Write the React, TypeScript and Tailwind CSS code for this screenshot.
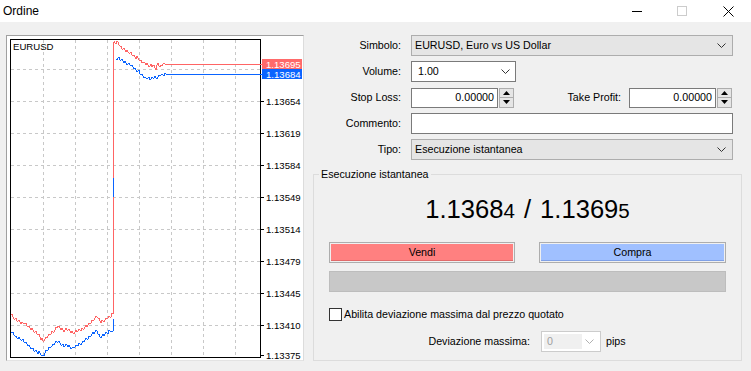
import React from "react";

type Pt = [number, number];

const redLeft: Pt[] = [[11,313],[13,317],[17,320],[21,323],[25,323],[29,327],[33,330],[37,333],[40,337],[43,341],[46,338],[50,334],[54,331],[58,326],[61,329],[64,331],[67,329],[70,331],[73,333],[77,331],[81,330],[85,327],[89,324],[93,320],[97,316],[99,319],[101,322],[104,321],[107,318],[110,317],[113,313]];
const blueLeft: Pt[] = [[11,331],[13,333],[17,338],[21,339],[25,342],[29,346],[33,349],[37,352],[40,353],[43,356],[46,351],[50,347],[54,344],[58,341],[61,344],[64,346],[67,345],[70,347],[73,348],[77,345],[81,344],[85,340],[89,337],[93,333],[97,331],[100,337],[103,335],[107,333],[110,331],[113,331]];
const redRight: Pt[] = [[114,42],[116,43],[118,42],[120,46],[123,49],[126,51],[129,52],[132,54],[135,57],[138,58],[141,61],[144,63],[147,64],[150,66],[153,65],[156,69],[158,63],[160,67],[163,64],[166,64]];
const blueRight: Pt[] = [[116,59],[119,58],[121,60],[124,62],[127,64],[130,64],[133,67],[136,70],[139,71],[142,75],[145,78],[148,78],[151,79],[154,77],[157,78],[160,75],[163,75],[166,74]];

const jitter = [0, 1, -1, 0, 1, 0, -1, 1, 0, -1];

// walk keypoints pixel by pixel with a little jag, like the terminal draws ticks
function series(keys: Pt[], seed: number) {
  const out: string[] = [];
  for (let k = 0; k < keys.length - 1; k++) {
    const [x0, y0] = keys[k];
    const [x1, y1] = keys[k + 1];
    for (let x = x0; x < x1; x++) {
      const y = y0 + ((y1 - y0) * (x - x0)) / (x1 - x0);
      out.push(`${x},${Math.round(y + jitter[(x + seed) % 10] * 1.2)}`);
    }
  }
  const last = keys[keys.length - 1];
  out.push(`${last[0]},${last[1]}`);
  return out.join(" ");
}

const gridX = [43, 75, 107, 139, 171, 203, 235];
const gridY = [69, 101, 133, 165, 197, 229, 261, 293, 325];
const axis = [
  ["1.13654", 101], ["1.13619", 133], ["1.13584", 165], ["1.13549", 197], ["1.13514", 229],
  ["1.13479", 261], ["1.13445", 293], ["1.13410", 325], ["1.13375", 355],
] as const;

function Chart() {
  return (
    <svg width="296" height="324" viewBox="7 36 296 324" shapeRendering="crispEdges" style={{ fontFamily: '"Liberation Sans", Arial, sans-serif' }}>
      {gridX.map((x) => (
        <line key={x} x1={x + 0.5} y1={40} x2={x + 0.5} y2={357} stroke="#c8c8c8" strokeDasharray="3 3" />
      ))}
      {gridY.map((y) => (
        <line key={y} x1={11} y1={y + 0.5} x2={260} y2={y + 0.5} stroke="#c8c8c8" strokeDasharray="3 3" />
      ))}
      <rect x={10.5} y={39.5} width={250} height={318} fill="none" stroke="#000" />
      <text x={13} y={50} fontSize="9.6" fill="#000">EURUSD</text>

      <polyline points={series(redLeft, 0)} fill="none" stroke="#ff6464" />
      <polyline points={series(blueLeft, 3)} fill="none" stroke="#0a64ff" />
      <rect x={113} y={42} width={1} height={272} fill="#ff6464" />
      <rect x={113} y={178} width={1} height={19} fill="#0a64ff" />
      <rect x={113} y={319} width={1} height={12} fill="#0a64ff" />
      <polyline points={series(redRight, 5)} fill="none" stroke="#ff6464" />
      <polyline points={series(blueRight, 7)} fill="none" stroke="#0a64ff" />
      <rect x={166} y={64} width={96} height={1} fill="#ff6464" />
      <rect x={166} y={74} width={96} height={1} fill="#0a64ff" />

      {axis.map(([label, y]) => (
        <g key={label}>
          <line x1={261} y1={y + 0.5} x2={264} y2={y + 0.5} stroke="#000" />
          <text x={266} y={y + 4} fontSize="9.6" fill="#000">{label}</text>
        </g>
      ))}
      <rect x={262} y={59} width={40} height={10} fill="#ff6a6a" />
      <text x={266} y={67.5} fontSize="9.6" fill="#fff">1.13695</text>
      <rect x={262} y={69} width={40} height={10} fill="#0a64ff" />
      <text x={266} y={77.5} fontSize="9.6" fill="#fff">1.13684</text>
    </svg>
  );
}

function Chevron({ color = "#333" }: { color?: string }) {
  return (
    <svg width="9" height="5" viewBox="0 0 9 5">
      <polyline points="0.5,0.5 4.5,4.5 8.5,0.5" fill="none" stroke={color} />
    </svg>
  );
}

function Spin() {
  return (
    <div className="flex h-full w-[15px] flex-col border border-[#adadad] bg-[#e5e5e5]">
      <div className="flex flex-1 items-center justify-center border-b border-[#adadad]">
        <svg width="7" height="4" viewBox="0 0 7 4"><polygon points="3.5,0 7,4 0,4" fill="#000" /></svg>
      </div>
      <div className="flex flex-1 items-center justify-center">
        <svg width="7" height="4" viewBox="0 0 7 4"><polygon points="0,0 7,0 3.5,4" fill="#000" /></svg>
      </div>
    </div>
  );
}

function Row({ label, children }: { label: string; children: React.ReactNode }) {
  return (
    <div className="flex h-[21px] items-center">
      <div className="w-[88px] text-right">{label}</div>
      <div className="ml-[10px] flex h-full items-center">{children}</div>
    </div>
  );
}

export default function App() {
  return (
    <div
      className="h-[371px] w-[751px] overflow-hidden bg-[#f0f0f0] text-[10.7px] text-black"
      style={{ fontFamily: '"Liberation Sans", Arial, sans-serif' }}
    >
      <div className="flex h-[22px] items-center bg-white pl-[3px]">
        <span className="text-[12px]">Ordine</span>
        <div className="ml-auto flex items-center">
          <div className="h-[1px] w-[10px] bg-black" />
          <div className="ml-[35px] h-[10px] w-[10px] border border-[#cccccc]" />
          <svg className="ml-[36px] mr-[17px]" width="11" height="11" viewBox="0 0 11 11">
            <path d="M0.5 0.5 L10.5 10.5 M10.5 0.5 L0.5 10.5" stroke="#000" />
          </svg>
        </div>
      </div>

      <div className="flex">
        <div className="ml-[6px] mt-[13px] h-[326px] w-[298px] border-t border-l border-r border-b border-t-[#a0a0a0] border-l-[#a0a0a0] border-r-[#dcdcdc] border-b-[#e3e3e3] bg-white">
          <Chart />
        </div>

        <div className="ml-[9px] mt-[13px] w-[428px]">
          <div className="flex flex-col gap-[5px]">
            <Row label="Simbolo:">
              <div className="flex h-full w-[322px] items-center border border-[#adadad] bg-[#e5e5e5] pl-[3px] pr-[6px]">
                <span>EURUSD, Euro vs US Dollar</span>
                <span className="ml-auto"><Chevron /></span>
              </div>
            </Row>
            <Row label="Volume:">
              <div className="flex h-full w-[105px] items-center border border-[#7a7a7a] bg-white pl-[6px] pr-[5px]">
                <span>1.00</span>
                <span className="ml-auto"><Chevron /></span>
              </div>
            </Row>
            <Row label="Stop Loss:">
              <div className="flex h-[20px] w-[87px] items-center justify-end border border-[#7a7a7a] bg-white pr-[3px]">0.00000</div>
              <div className="ml-[1px] h-[20px]"><Spin /></div>
              <div className="w-[107px] text-right">Take Profit:</div>
              <div className="ml-[8px] flex h-[20px] w-[87px] items-center justify-end border border-[#7a7a7a] bg-white pr-[3px]">0.00000</div>
              <div className="ml-[1px] h-[20px]"><Spin /></div>
            </Row>
            <Row label="Commento:">
              <div className="h-full w-[322px] border border-[#7a7a7a] bg-white" />
            </Row>
            <Row label="Tipo:">
              <div className="flex h-full w-[322px] items-center border border-[#adadad] bg-[#e5e5e5] pl-[3px] pr-[6px]">
                <span>Esecuzione istantanea</span>
                <span className="ml-auto"><Chevron /></span>
              </div>
            </Row>
          </div>

          <fieldset className="mt-[8px] h-[193px] border border-[#dcdcdc] p-0">
            <legend className="ml-[5px] px-[2px] leading-[13px]">Esecuzione istantanea</legend>
            <div className="px-[15px]">
              <div className="pt-[13px] text-center text-[25.6px] leading-[30px]">
                1.1368<span className="text-[20.5px]">4</span>
                <span className="mx-[9px]">/</span>
                1.1369<span className="text-[20.5px]">5</span>
              </div>
              <div className="mt-[16px] flex h-[21px] justify-between">
                <div className="w-[186px] border border-[#adadad] p-[1px]">
                  <div className="flex h-full items-center justify-center border-b border-[#e06a6a] bg-[#ff8080]">Vendi</div>
                </div>
                <div className="w-[187px] border border-[#adadad] p-[1px]">
                  <div className="flex h-full items-center justify-center border-b border-[#7fa0e6] bg-[#a0c0ff]">Compra</div>
                </div>
              </div>
              <div className="mt-[8px] h-[21px] w-[397px] border border-[#bdbdbd] bg-[#c8c8c8]" />
              <div className="mt-[16px] flex h-[13px] items-center">
                <div className="h-[13px] w-[13px] border border-[#333333] bg-white" />
                <span className="ml-[2px]">Abilita deviazione massima dal prezzo quotato</span>
              </div>
              <div className="mt-[10px] flex h-[21px] items-center">
                <div className="w-[201px] text-right">Deviazione massima:</div>
                <div className="ml-[11px] flex h-full w-[60px] items-center border border-[#cccccc] bg-white p-[2px]">
                  <div className="flex h-full w-[38px] items-center bg-[#f0f0f0] pl-[3px] text-[#a0a0a0]">0</div>
                  <span className="ml-auto mr-[4px]"><Chevron color="#b0b0b0" /></span>
                </div>
                <span className="ml-[5px]">pips</span>
              </div>
            </div>
          </fieldset>
        </div>
      </div>
    </div>
  );
}
